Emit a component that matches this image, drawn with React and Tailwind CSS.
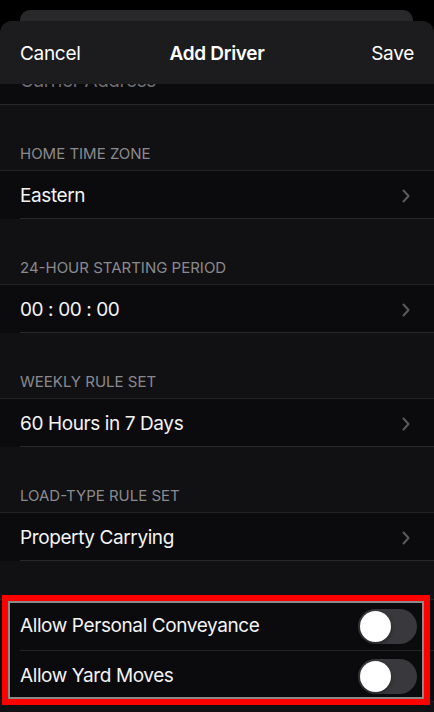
import React from "react";

const sections = [
  { title: "Home Time Zone", value: "Eastern" },
  { title: "24-Hour Starting Period", value: "00 : 00 : 00" },
  { title: "Weekly Rule Set", value: "60 Hours in 7 Days" },
  { title: "Load-Type Rule Set", value: "Property Carrying" },
];

function Chevron() {
  return (
    <svg width="8" height="14" viewBox="0 0 8 14" fill="none" className="shrink-0">
      <path d="M1.5 1.5 L6.5 7 L1.5 12.5" stroke="#5a5a5e" strokeWidth="2" strokeLinecap="round" strokeLinejoin="round" />
    </svg>
  );
}

function Toggle() {
  return (
    <div className="w-[59px] h-[35px] rounded-full bg-[#39393d] p-[2px] flex items-center shrink-0">
      <div className="w-[31px] h-[31px] rounded-full bg-white shadow-[0_2px_4px_rgba(0,0,0,0.35)]" />
    </div>
  );
}

export default function App() {
  return (
    <div className="w-[434px] h-[712px] bg-black overflow-hidden relative font-['Inter','Noto_Sans',sans-serif] text-white">
      <div className="h-[10px]" />
      <div className="h-[11px] ml-[20px] mr-[21px] rounded-t-[10px] bg-[#29292b]" />

      <div className="rounded-t-[12px] bg-[#111113] overflow-hidden">
        {/* Nav bar */}
        <div className="h-[63px] bg-[#1c1c1e] grid grid-cols-[1fr_auto_1fr] items-center px-[20px] pt-[4px] text-[19px] tracking-[-0.3px]">
          <span className="justify-self-start">Cancel</span>
          <span className="font-semibold">Add Driver</span>
          <span className="justify-self-end">Save</span>
        </div>

        {/* Carrier address row, scrolled under nav */}
        <div className="h-[21px] overflow-hidden bg-[#0b0b0d] border-b border-[#29292b] px-[20px]">
          <div className="text-[19px] leading-[24px] -mt-[15px] text-[#6e6e73] tracking-[-0.4px]">Carrier Address</div>
        </div>

        {sections.map((s) => (
          <div key={s.title}>
            <div className="h-[65px] flex items-end px-[20px] pb-[7px] text-[15px] leading-[18px] uppercase text-[#8a8a8f]">
              {s.title}
            </div>
            <div className="h-[49px] bg-[#0b0b0d] border-t border-[#232325] flex flex-col">
              <div className="flex-1 flex items-center justify-between pl-[20px] pr-[24px] pt-[3px] text-[19px] tracking-[-0.4px] text-[#f4f4f4]">
                <span>{s.value}</span>
                <Chevron />
              </div>
              <div className="ml-[20px] h-px bg-[#29292b]" />
            </div>
          </div>
        ))}

        <div className="h-[38px]" />

        {/* Toggle group */}
        <div className="bg-[#0b0b0d] border-t border-[#232325] border-b">
          <div className="h-[50px] flex items-center justify-between pl-[20px] pr-[17px] pt-[2px] text-[19px] tracking-[-0.4px] text-[#f4f4f4]">
            <span>Allow Personal Conveyance</span>
            <Toggle />
          </div>
          <div className="ml-[20px] h-px bg-[#232325]" />
          <div className="h-[50px] flex items-center justify-between pl-[20px] pr-[17px] text-[19px] tracking-[-0.4px] text-[#f4f4f4]">
            <span>Allow Yard Moves</span>
            <Toggle />
          </div>
        </div>
        <div className="h-[40px]" />
      </div>

      {/* Red annotation box */}
      <div className="absolute left-[2px] top-[595px] w-[428px] h-[110px] border-[6px] border-[#ff0000] pointer-events-none">
        <div className="w-full h-full border-[2px] border-[#8a8a8a]" />
      </div>
    </div>
  );
}
